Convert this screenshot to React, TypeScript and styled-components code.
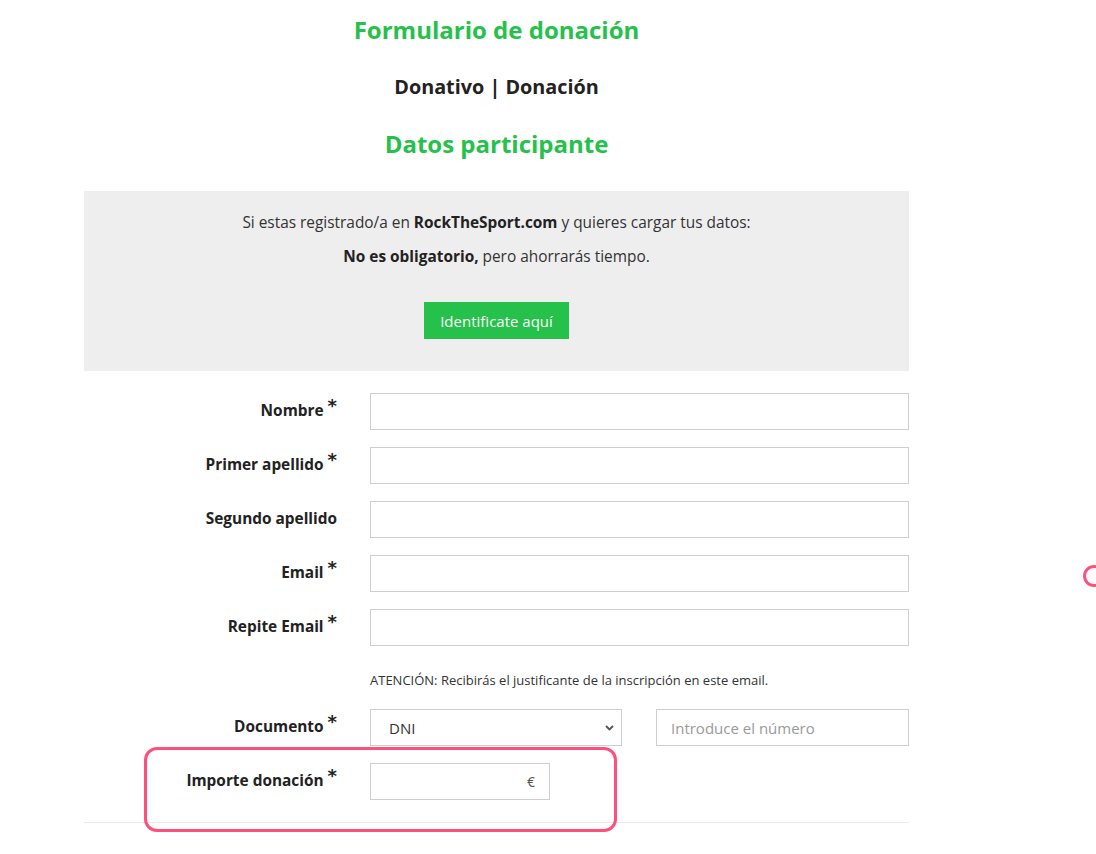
import React from "react";
import styled, { createGlobalStyle } from "styled-components";

const Global = createGlobalStyle`
  html, body { margin: 0; padding: 0; background: #fff; }
  body { font-family: "Open Sans", "Noto Sans", Arial, sans-serif; color: #222; }
  * { box-sizing: border-box; }
`;

const Page = styled.div`
  position: relative;
  width: 1096px;
  height: 854px;
  overflow: hidden;
`;

const Column = styled.div`
  position: relative;
  width: 825px;
  margin-left: 84px;
  padding-top: 14px;
`;

const Title = styled.h2<{ $dark?: boolean; $size?: number }>`
  margin: 0;
  text-align: center;
  font-weight: 700;
  font-size: ${(p) => p.$size ?? 24}px;
  line-height: 32px;
  color: ${(p) => (p.$dark ? "#222" : "#25c14a")};
`;

const Stack = styled.div`
  display: flex;
  flex-direction: column;
  gap: 25px;
`;

const InfoBox = styled.div`
  margin-top: 31px;
  background: #eeeeee;
  padding: 20px 0 32px;
  display: flex;
  flex-direction: column;
  align-items: center;
  font-size: 15.4px;
  color: #333;
`;

const InfoLine = styled.p`
  margin: 0;
  line-height: 24px;
  & + & { margin-top: 10px; }
  b { color: #222; }
`;

const GreenButton = styled.button`
  margin-top: 33px;
  height: 37px;
  padding: 0 16px;
  border: 0;
  background: #25c14a;
  color: #fff;
  font-family: inherit;
  font-size: 15px;
`;

const Form = styled.div`
  margin-top: 22px;
  display: flex;
  flex-direction: column;
  gap: 17px;
  padding-bottom: 22px;
  border-bottom: 1px solid #ececec;
`;

const Row = styled.div`
  display: grid;
  grid-template-columns: 256px 1fr;
  column-gap: 30px;
  align-items: center;
`;

const Label = styled.label`
  display: block;
  text-align: right;
  font-size: 15.4px;
  line-height: 20px;
  font-weight: 700;
  color: #222;
  padding-right: 3px;
  margin-top: -1px;
`;

const Star = styled.span`
  display: inline-block;
  margin-left: 4px;
  font-family: "DejaVu Sans", sans-serif;
  font-weight: 700;
  font-size: 18px;
  line-height: 10px;
  vertical-align: 4px;
`;

const Field = styled.div<{ $width?: number }>`
  height: 37px;
  width: ${(p) => (p.$width ? `${p.$width}px` : "100%")};
  border: 1px solid #cfcfcf;
  background: #fff;
  display: flex;
  align-items: center;
  font-size: 15px;
  padding: 0 18px;
`;

const Placeholder = styled.span`
  color: #9a9a9a;
  font-size: 15px;
`;

const Select = styled(Field)`
  justify-content: space-between;
  padding-right: 7px;
  color: #333;
`;

const NumberField = styled(Field)`
  padding-left: 14px;
`;

const Euro = styled(Field)`
  justify-content: flex-end;
  padding-right: 14px;
  color: #555;
  font-size: 14px;
`;

const DocFields = styled.div`
  display: grid;
  grid-template-columns: 252px 253px;
  justify-content: space-between;
`;

const Note = styled.div`
  grid-column: 2;
  font-size: 13px;
  color: #333;
  margin-top: 9px;
  margin-bottom: 4px;
  line-height: 16px;
`;

const Highlight = styled.div`
  position: absolute;
  left: 60px;
  top: 747px;
  width: 473px;
  height: 85px;
  border: 3px solid #ff4f7b;
  border-radius: 13px;
  pointer-events: none;
`;

const Ring = styled.div`
  position: absolute;
  left: 1083px;
  top: 565px;
  width: 22px;
  height: 22px;
  border: 3px solid #ff4f7b;
  border-radius: 50%;
`;

const Chevron = () => (
  <svg width="9" height="6" viewBox="0 0 9 6">
    <path d="M1 1 L4.5 4.5 L8 1" fill="none" stroke="#555" strokeWidth="1.8" />
  </svg>
);

const fields: { label: string; req: boolean }[] = [
  { label: "Nombre", req: true },
  { label: "Primer apellido", req: true },
  { label: "Segundo apellido", req: false },
  { label: "Email", req: true },
  { label: "Repite Email", req: true },
];

export default function App() {
  return (
    <Page>
      <Global />
      <Column>
        <Stack>
          <Title>Formulario de donación</Title>
          <Title $dark $size={19.8}>Donativo | Donación</Title>
          <Title>Datos participante</Title>
        </Stack>
        <InfoBox>
          <InfoLine>
            Si estas registrado/a en <b>RockTheSport.com</b> y quieres cargar tus datos:
          </InfoLine>
          <InfoLine>
            <b>No es obligatorio,</b> pero ahorrarás tiempo.
          </InfoLine>
          <GreenButton>Identificate aquí</GreenButton>
        </InfoBox>
        <Form>
          {fields.map((f) => (
            <Row key={f.label}>
              <Label>
                {f.label}
                {f.req && <Star>*</Star>}
              </Label>
              <Field />
            </Row>
          ))}
          <Row>
            <Note>ATENCIÓN: Recibirás el justificante de la inscripción en este email.</Note>
          </Row>
          <Row>
            <Label>
              Documento<Star>*</Star>
            </Label>
            <DocFields>
              <Select>
                <span>DNI</span>
                <Chevron />
              </Select>
              <NumberField>
                <Placeholder>Introduce el número</Placeholder>
              </NumberField>
            </DocFields>
          </Row>
          <Row>
            <Label>
              Importe donación<Star>*</Star>
            </Label>
            <Euro $width={180}>€</Euro>
          </Row>
        </Form>
        <Highlight />
      </Column>
      <Ring />
    </Page>
  );
}
